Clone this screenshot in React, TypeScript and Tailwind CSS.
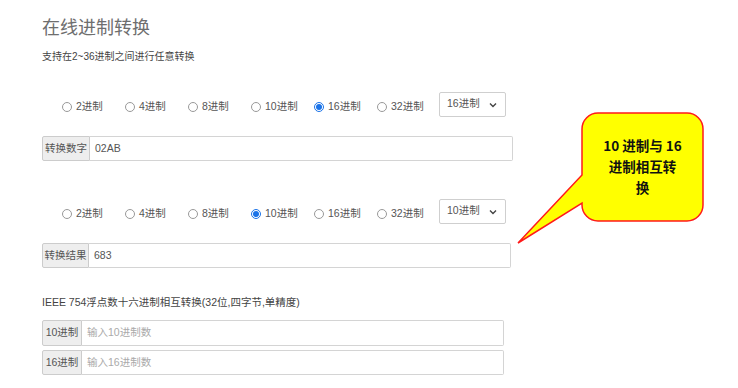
import { useState } from "react";

const bases = [2, 4, 8, 10, 16, 32];

function Radio({ label, checked }: { label: string; checked: boolean }) {
  return (
    <label className="flex items-center w-[63px] pt-[5px] text-[10.5px] text-[#555]">
      {checked ? (
        <span className="w-[10px] h-[10px] rounded-full border border-[#1a73e8] flex items-center justify-center bg-white">
          <span className="w-[6px] h-[6px] rounded-full bg-[#1a73e8]" />
        </span>
      ) : (
        <span className="w-[10px] h-[10px] rounded-full border border-[#999] bg-white" />
      )}
      <span className="ml-[4px]">{label}</span>
    </label>
  );
}

function RadioRow({ selected, className }: { selected: number; className: string }) {
  return (
    <div className={"flex items-center h-[25px] " + className}>
      <div className="flex pl-[20px]">
        {bases.map((b) => (
          <Radio key={b} label={b + "进制"} checked={b === selected} />
        ))}
      </div>
      <div className="ml-[-1px] w-[67px] h-[25px] border border-[#cfcfcf] rounded-[2px] bg-white flex items-center justify-between pl-[7px] pr-[8px] text-[10.5px] text-[#555]">
        <span className="-mt-[2px]">{selected}进制</span>
        <svg width="8" height="6" viewBox="0 0 8 6">
          <path d="M1 1.5 L4 4.5 L7 1.5" fill="none" stroke="#444" strokeWidth="1.4" />
        </svg>
      </div>
    </div>
  );
}

function InputGroup({
  label,
  value,
  placeholder,
  width,
  labelWidth,
  className,
}: {
  label: string;
  value?: string;
  placeholder?: string;
  width: string;
  labelWidth: string;
  className: string;
}) {
  return (
    <div className={"flex h-[25px] " + width + " " + className}>
      <div
        className={
          "flex items-center justify-center bg-[#eeeeee] border border-[#cccccc] rounded-l-[2px] text-[10.5px] text-[#555] shrink-0 " +
          labelWidth
        }
      >
        {label}
      </div>
      <div className="flex-1 flex items-center border border-l-0 border-[#d4d4d4] rounded-r-[2px] bg-white pl-[5px] text-[10.5px]">
        {value ? <span className="text-[#555]">{value}</span> : <span className="text-[#aaa]">{placeholder}</span>}
      </div>
    </div>
  );
}

export default function App() {
  const [from] = useState(16);
  const [to] = useState(10);

  return (
    <div
      className="relative w-[738px] h-[388px] bg-white overflow-hidden"
      style={{ fontFamily: '"Liberation Sans", "Noto Sans CJK SC", sans-serif' }}
    >
      <div className="pl-[42px] pt-[14px]">
        <h1 className="text-[18px] leading-[28px] text-[#6e6e6e]">在线进制转换</h1>
        <p className="mt-[8px] text-[10px] leading-[14px] text-[#444]">支持在2~36进制之间进行任意转换</p>

        <RadioRow selected={from} className="mt-[28px]" />
        <InputGroup label="转换数字" value="02AB" width="w-[471px]" labelWidth="w-[48px]" className="mt-[19px] h-[24px]" />

        <RadioRow selected={to} className="mt-[38px]" />
        <InputGroup label="转换结果" value="683" width="w-[469px]" labelWidth="w-[47px]" className="mt-[19px]" />

        <p className="mt-[27px] text-[10.5px] leading-[14px] text-[#444]">IEEE 754浮点数十六进制相互转换(32位,四字节,单精度)</p>
        <InputGroup label="10进制" placeholder="输入10进制数" width="w-[462px]" labelWidth="w-[40px]" className="mt-[11px] h-[26px]" />
        <InputGroup label="16进制" placeholder="输入16进制数" width="w-[462px]" labelWidth="w-[40px]" className="mt-[4px]" />
      </div>

      <svg className="absolute left-0 top-0" width="738" height="388" viewBox="0 0 738 388">
        <path
          d="M598 113 H687 A16 16 0 0 1 703 129 V205 A16 16 0 0 1 687 221 H598 A16 16 0 0 1 582 205 V203 L518 243 L582 175 V129 A16 16 0 0 1 598 113 Z"
          fill="#ffff00"
          stroke="#ff1a1a"
          strokeWidth="1.5"
        />
      </svg>
      <div
        className="absolute left-[582px] top-[135px] w-[121px] text-center text-[13.5px] leading-[21px] font-bold text-[#111]"
        style={{ fontFamily: '"Noto Sans CJK SC", sans-serif' }}
      >
        10 进制与 16
        <br />
        进制相互转
        <br />换
      </div>
    </div>
  );
}
